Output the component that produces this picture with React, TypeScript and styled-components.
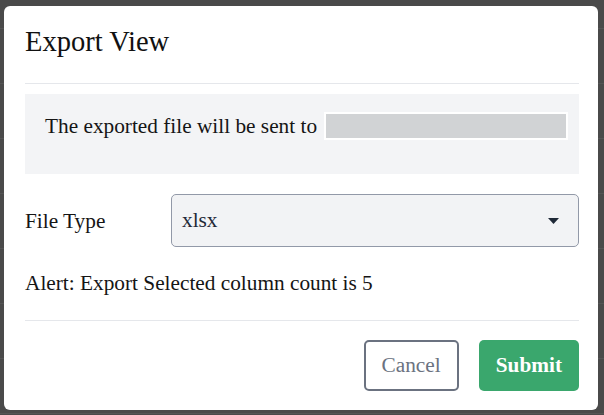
import React from 'react';
import styled, { createGlobalStyle } from 'styled-components';

const SERIF = '"Liberation Serif", "DejaVu Serif", serif';
const BODY_SIZE = '21.3px';

const GlobalStyle = createGlobalStyle`
  html, body {
    margin: 0;
    padding: 0;
    background: #4a4a4a;
  }
  * {
    box-sizing: border-box;
  }
`;

const Page = styled.div`
  position: relative;
  width: 604px;
  height: 415px;
  overflow: hidden;
  background: #4a4a4a;
  font-family: ${SERIF};
`;

const BackTable = styled.div`
  margin-top: -26px;
`;

const BackRow = styled.div`
  height: 55px;
  border-bottom: 1px solid #555555;
`;

const Overlay = styled.div`
  position: absolute;
  inset: 0;
  padding: 6px 6px 5px 4px;
  display: flex;
  align-items: flex-start;
`;

const Modal = styled.div`
  width: 594px;
  height: 404px;
  background: #ffffff;
  border-radius: 6px;
  padding: 0 19px 19px 21px;
  display: flex;
  flex-direction: column;
  color: #151515;
`;

const Header = styled.div`
  padding: 20px 0 25px;
  border-bottom: 1px solid #e5e7eb;
`;

const Title = styled.h2`
  margin: 0;
  font-size: 28.5px;
  line-height: 32px;
  font-weight: normal;
  color: #111111;
`;

const InfoBox = styled.div`
  margin-top: 10px;
  background: #f3f4f6;
  padding: 18px 20px 34px;
`;

const InfoRow = styled.div`
  display: flex;
  align-items: center;
  height: 28px;
  gap: 7px;
  font-size: ${BODY_SIZE};
  line-height: 28px;
  white-space: nowrap;
`;

const Recipient = styled.div`
  flex: 0 0 244px;
  height: 28px;
  background: #d1d3d5;
  border: 2px solid #ffffff;
`;

const FieldRow = styled.div`
  margin-top: 20px;
  display: flex;
  align-items: center;
`;

const Label = styled.label`
  width: 146px;
  font-size: ${BODY_SIZE};
  line-height: 28px;
`;

const Select = styled.div`
  flex: 1;
  height: 53px;
  background: #f2f3f5;
  border: 1px solid #9299a8;
  border-radius: 5px;
  display: flex;
  align-items: center;
  justify-content: space-between;
  padding: 0 19px 0 10px;
  font-size: ${BODY_SIZE};
  color: #1f2937;
`;

const Alert = styled.p`
  margin: 22px 0 0;
  font-size: ${BODY_SIZE};
  line-height: 28px;
`;

const Divider = styled.hr`
  margin: 23px 0 0;
  border: none;
  border-top: 1px solid #e5e7eb;
`;

const Footer = styled.div`
  margin-top: 19px;
  display: flex;
  justify-content: flex-end;
  gap: 20px;
`;

const Button = styled.button<{ $primary?: boolean }>`
  height: 51px;
  padding: 0 ${p => (p.$primary ? '17px' : '16px')};
  border-radius: 5px;
  font-family: ${SERIF};
  font-size: ${BODY_SIZE};
  font-weight: ${p => (p.$primary ? 600 : 400)};
  cursor: pointer;
  background: ${p => (p.$primary ? '#3aa76d' : '#ffffff')};
  color: ${p => (p.$primary ? '#ffffff' : '#6b7280')};
  border: ${p => (p.$primary ? 'none' : '2px solid #6b7280')};
`;

const Caret = () => (
  <svg width="11" height="6" viewBox="0 0 11 6">
    <path d="M0 0 H11 L5.5 6 Z" fill="#1f2937" />
  </svg>
);

const rows = [0, 1, 2, 3, 4, 5, 6, 7];

const App = () => (
  <>
    <GlobalStyle />
    <Page>
      <BackTable>
        {rows.map(row => (
          <BackRow key={row} />
        ))}
      </BackTable>
      <Overlay>
        <Modal>
          <Header>
            <Title>Export View</Title>
          </Header>
          <InfoBox>
            <InfoRow>
              <span>The exported file will be sent to</span>
              <Recipient />
            </InfoRow>
          </InfoBox>
          <FieldRow>
            <Label>File Type</Label>
            <Select>
              <span>xlsx</span>
              <Caret />
            </Select>
          </FieldRow>
          <Alert>Alert: Export Selected column count is 5</Alert>
          <Divider />
          <Footer>
            <Button>Cancel</Button>
            <Button $primary>Submit</Button>
          </Footer>
        </Modal>
      </Overlay>
    </Page>
  </>
);

export default App;
